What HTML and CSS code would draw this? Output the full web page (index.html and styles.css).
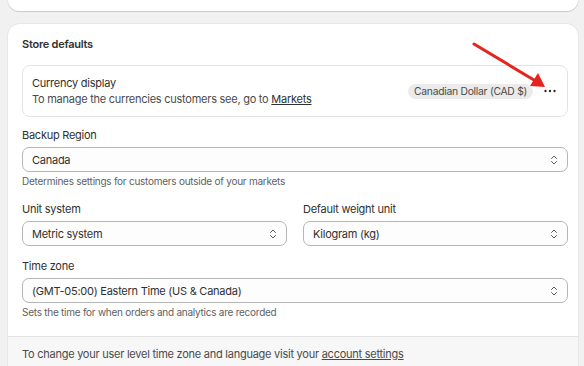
FILE: index.html
```html
<!DOCTYPE html>
<html lang="en">
<head>
    <meta charset="UTF-8">
    <meta name="viewport" content="width=device-width, initial-scale=1.0">
    <title>Store defaults</title>
    <link rel="stylesheet" href="styles.css">
</head>
<body>
    <div class="card card-top"></div>

    <div class="card">
        <div class="card-body">
            <h2 class="card-title">Store defaults</h2>

            <div class="currency-box">
                <div class="currency-text">
                    <div>Currency display</div>
                    <div class="muted">To manage the currencies customers see, go to <a href="#">Markets</a></div>
                </div>
                <span class="badge">Canadian Dollar (CAD $)</span>
                <button class="dots" aria-label="More actions">
                    <svg width="12" height="4" viewBox="0 0 12 4">
                        <circle cx="1.5" cy="2" r="1.2"/>
                        <circle cx="6" cy="2" r="1.2"/>
                        <circle cx="10.5" cy="2" r="1.2"/>
                    </svg>
                </button>
            </div>

            <div class="field first">
                <label>Backup Region</label>
                <div class="select">
                    <span>Canada</span>
                    <svg class="chevron" width="8" height="12" viewBox="0 0 8 12"><path d="M1.5 4.5 4 2l2.5 2.5M1.5 7.5 4 10l2.5-2.5"/></svg>
                </div>
                <div class="help">Determines settings for customers outside of your markets</div>
            </div>

            <div class="field-row">
                <div class="field">
                    <label>Unit system</label>
                    <div class="select">
                        <span>Metric system</span>
                        <svg class="chevron" width="8" height="12" viewBox="0 0 8 12"><path d="M1.5 4.5 4 2l2.5 2.5M1.5 7.5 4 10l2.5-2.5"/></svg>
                    </div>
                </div>
                <div class="field">
                    <label>Default weight unit</label>
                    <div class="select">
                        <span>Kilogram (kg)</span>
                        <svg class="chevron" width="8" height="12" viewBox="0 0 8 12"><path d="M1.5 4.5 4 2l2.5 2.5M1.5 7.5 4 10l2.5-2.5"/></svg>
                    </div>
                </div>
            </div>

            <div class="field">
                <label>Time zone</label>
                <div class="select">
                    <span>(GMT-05:00) Eastern Time (US &amp; Canada)</span>
                    <svg class="chevron" width="8" height="12" viewBox="0 0 8 12"><path d="M1.5 4.5 4 2l2.5 2.5M1.5 7.5 4 10l2.5-2.5"/></svg>
                </div>
                <div class="help">Sets the time for when orders and analytics are recorded</div>
            </div>
        </div>

        <div class="card-footer">
            To change your user level time zone and language visit your <a href="#">account settings</a>
        </div>
    </div>

    <!-- annotation arrow over the screenshot -->
    <svg class="arrow" width="584" height="366" viewBox="0 0 584 366">
        <line x1="474" y1="44" x2="534" y2="80" stroke="#e5241d" stroke-width="3" stroke-linecap="round"/>
        <polygon points="545,87 530,86 538,73" fill="#e5241d"/>
    </svg>
</body>
</html>
```

FILE: styles.css
```css
* {
    box-sizing: border-box;
    margin: 0;
    padding: 0;
}

html {
    overflow: hidden;
}

body {
    font-family: 'Inter', 'Noto Sans', sans-serif;
    font-size: 11px;
    line-height: 16px;
    letter-spacing: -0.25px;
    color: #303030;
    background-color: #f1f1f1;
    padding: 0 6px 0 8px;
    overflow: hidden;
    height: 366px;
    position: relative;
}

a {
    color: #303030;
    text-decoration: underline;
}

.card {
    background-color: #ffffff;
    border-radius: 12px;
    box-shadow: 0 1px 0 rgba(0,0,0,0.12), 0 0 0 1px rgba(0,0,0,0.04);
    overflow: hidden;
    margin-bottom: 13px;
}

.card-top {
    height: 11px;
    border-radius: 0 0 12px 12px;
}

.card-body {
    padding: 10px 10px 16px 14px;
}

.card-title {
    font-size: 11px;
    font-weight: 600;
    line-height: 20px;
    margin-bottom: 11px;
}

.currency-box {
    display: flex;
    align-items: center;
    border: 1px solid #e3e3e3;
    border-radius: 8px;
    padding: 9px 11px 9px 9px;
}

.currency-text {
    flex: 1;
}

.muted {
    color: #4a4a4a;
}

.badge {
    background-color: #ebebeb;
    color: #4a4a4a;
    border-radius: 8px;
    padding: 0 6px;
    font-size: 10.3px;
    line-height: 15px;
    margin-right: 11px;
}

.dots {
    background: none;
    border: none;
    display: flex;
}

.dots svg {
    fill: #303030;
}

.field {
    display: flex;
    flex-direction: column;
}

.field.first {
    margin-top: 10px;
}

.field label {
    line-height: 16px;
    margin-bottom: 4px;
}

.select {
    height: 25px;
    display: flex;
    align-items: center;
    justify-content: space-between;
    border: 1px solid #b5b5b5;
    border-radius: 7px;
    background-color: #fdfdfd;
    padding: 0 9px;
}

.chevron {
    fill: none;
    stroke: #5c5c5c;
    stroke-width: 1;
    stroke-linecap: round;
    stroke-linejoin: round;
}

.help {
    font-size: 10px;
    color: #616161;
    margin-top: 1px;
}

.field-row {
    display: grid;
    grid-template-columns: 1fr 1fr;
    gap: 16px;
    margin: 12px 0;
}

.card-footer {
    background-color: #f7f7f7;
    border-top: 1px solid #e3e3e3;
    padding: 9px 14px 14px;
    color: #4a4a4a;
}

.card-footer a {
    color: #4a4a4a;
}

.arrow {
    position: absolute;
    left: 0;
    top: 0;
    pointer-events: none;
}
```
